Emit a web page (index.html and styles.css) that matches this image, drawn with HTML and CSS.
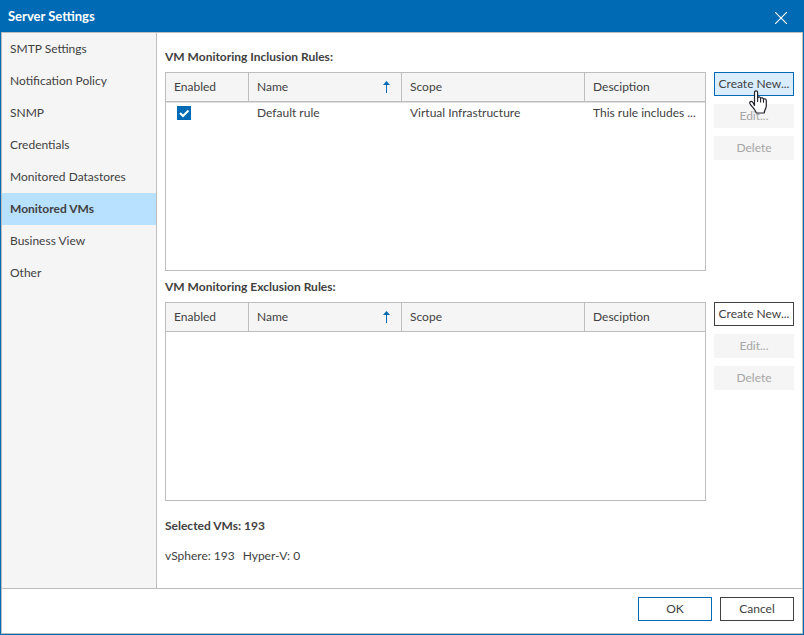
FILE: index.html
```html
<!DOCTYPE html>
<html lang="en">
<head>
<meta charset="utf-8">
<title>Server Settings</title>
<link rel="stylesheet" href="styles.css">
</head>
<body>
<div class="dialog">
  <header class="titlebar">
    <h1>Server Settings</h1>
    <button class="close" type="button" aria-label="Close">
      <svg width="12" height="12" viewBox="0 0 12 12"><path d="M0 0L12 12M12 0L0 12" stroke="#fff" stroke-width="1.1"/></svg>
    </button>
  </header>
  <div class="frame">
    <div class="body">
      <nav class="sidebar">
        <a href="#">SMTP Settings</a>
        <a href="#">Notification Policy</a>
        <a href="#">SNMP</a>
        <a href="#">Credentials</a>
        <a href="#">Monitored Datastores</a>
        <a href="#" class="active">Monitored VMs</a>
        <a href="#">Business View</a>
        <a href="#">Other</a>
      </nav>
      <main class="content">
        <section class="rules">
          <h2>VM Monitoring Inclusion Rules:</h2>
          <div class="grid">
            <table>
              <colgroup><col class="c-enabled"><col class="c-name"><col class="c-scope"><col></colgroup>
              <thead>
                <tr><th>Enabled</th><th><div class="sorted">Name <svg width="7" height="12" viewBox="0 0 7 12"><path d="M3.5 0L7 4H0Z" fill="#006bb4"/><path d="M3 3h1v9H3z" fill="#006bb4"/></svg></div></th><th>Scope</th><th>Desciption</th></tr>
              </thead>
              <tbody>
                <tr><td><label class="check"><input type="checkbox" checked aria-label="Enable Default rule"><svg width="14" height="14" viewBox="0 0 14 14"><path d="M3 7L6 10L11.5 4.5" fill="none" stroke="#fff" stroke-width="2"/></svg></label></td><td>Default rule</td><td>Virtual Infrastructure</td><td>This rule includes ...</td></tr>
              </tbody>
            </table>
          </div>
          <div class="actions">
            <button type="button" class="btn hover">Create New...
              <svg class="cursor" width="18" height="25" viewBox="0 0 18 25"><path d="M5.5 15.5V2.5C5.5.2 8.6.2 8.6 2.5V8C9.4 6.2 11.4 6.7 11.6 8.4C12.6 7.2 14.3 7.8 14.5 9.2C15.8 8.3 17.3 9.2 17.3 10.8V16C17.3 18.2 15.5 19.6 15.2 23H7.2C6.8 20 2.9 17 1 13.7C.1 11.8 2.3 10.5 3.8 12.3Z" fill="#fff" stroke="#22222c" stroke-width="1.2" stroke-linejoin="round"/><path d="M8.6 7.5v4.5M11.6 8.4v4M14.5 9.2v3.5" stroke="#22222c" stroke-width="1.1"/></svg>
            </button>
            <button type="button" class="btn" disabled>Edit...</button>
            <button type="button" class="btn" disabled>Delete</button>
          </div>
        </section>
        <section class="rules">
          <h2>VM Monitoring Exclusion Rules:</h2>
          <div class="grid">
            <table>
              <colgroup><col class="c-enabled"><col class="c-name"><col class="c-scope"><col></colgroup>
              <thead>
                <tr><th>Enabled</th><th><div class="sorted">Name <svg width="7" height="12" viewBox="0 0 7 12"><path d="M3.5 0L7 4H0Z" fill="#006bb4"/><path d="M3 3h1v9H3z" fill="#006bb4"/></svg></div></th><th>Scope</th><th>Desciption</th></tr>
              </thead>
            </table>
          </div>
          <div class="actions">
            <button type="button" class="btn">Create New...</button>
            <button type="button" class="btn" disabled>Edit...</button>
            <button type="button" class="btn" disabled>Delete</button>
          </div>
        </section>
        <h2 class="total">Selected VMs: 193</h2>
        <p class="counts"><span>vSphere: 193</span><span>Hyper-V: 0</span></p>
      </main>
    </div>
    <footer class="footer">
      <button type="button" class="btn primary">OK</button>
      <button type="button" class="btn">Cancel</button>
    </footer>
  </div>
</div>
</body>
</html>
```
FILE: styles.css
```css
* { box-sizing: border-box; }

body {
  margin: 0;
  color: #414141;
  background: #fff;
  font: 12px/16px Lato, "Open Sans", sans-serif;
}

h1, h2, p { margin: 0; font-size: 12px; }
h1 { font-size: 13px; }
button, input { font: inherit; color: inherit; }

.dialog {
  display: flex;
  flex-direction: column;
  min-height: 100vh;
  border: 1px solid #006bb4;
}

.titlebar {
  display: flex;
  align-items: center;
  justify-content: space-between;
  height: 31px;
  padding: 0 16px 1px 7px;
  background: #006bb4;
  color: #fff;
}

.close {
  display: flex;
  margin-top: 4px;
  padding: 0;
  border: 0;
  background: none;
}

.frame {
  flex: 1;
  display: flex;
  flex-direction: column;
  border: 1px solid #bdbdbd;
}

.body { flex: 1; display: flex; }

.sidebar {
  width: 155px;
  flex: none;
  background: #f5f5f5;
  border-right: 1px solid #bdbdbd;
}

.sidebar a {
  display: block;
  padding: 8px;
  color: inherit;
  text-decoration: none;
}

.sidebar .active { background: #b8e0ff; font-weight: bold; }

.content {
  flex: 1;
  min-width: 0;
  padding: 16px 8px;
}

.rules {
  display: grid;
  grid-template-columns: minmax(0, 1fr) 80px;
  column-gap: 8px;
  row-gap: 7px;
  margin-bottom: 8px;
}

.rules h2 { grid-column: 1 / -1; }

.grid {
  min-height: 199px;
  border: 1px solid #bdbdbd;
}

table {
  width: 100%;
  table-layout: fixed;
  border-collapse: separate;
  border-spacing: 0;
}

.c-enabled { width: 83px; }
.c-name { width: 153px; }
.c-scope { width: 183px; }

th, td {
  padding: 0 8px;
  text-align: left;
  font-weight: normal;
  white-space: nowrap;
  overflow: hidden;
  text-overflow: ellipsis;
}

th {
  height: 29px;
  background: #f5f5f5;
  border-right: 1px solid #bdbdbd;
  border-bottom: 1px solid #bdbdbd;
}

th:last-child { border-right: 0; }
td { height: 20px; }
tbody tr:first-child td { border-top: 1px solid #e0e0e0; }

.sorted {
  display: flex;
  align-items: center;
  justify-content: space-between;
  padding-right: 3px;
}

.check {
  display: grid;
  width: 14px;
  height: 14px;
  margin: 0 3px;
}

.check > * { grid-area: 1 / 1; }

.check input {
  appearance: none;
  width: 14px;
  height: 14px;
  margin: 0;
  border: 1px solid #006bb4;
}

.check input:checked { background: #006bb4; }
.check svg { z-index: 1; pointer-events: none; }

.actions { display: flex; flex-direction: column; gap: 8px; }

.btn {
  height: 24px;
  padding: 0;
  border: 1px solid #414141;
  background: #fff;
  white-space: nowrap;
}

.btn:disabled { border-color: #f5f5f5; background: #f5f5f5; color: #a6a6a6; }
.btn.hover { position: relative; border-color: #006bb4; background: #d9edff; }
.btn.primary { border-color: #006bb4; }

.cursor { position: absolute; left: 34px; top: 17px; z-index: 1; }

.total { margin-top: 17px; }

.counts { display: flex; gap: 8px; margin-top: 14px; }

.footer {
  display: flex;
  justify-content: flex-end;
  gap: 8px;
  padding: 8px 8px 12px;
  border-top: 1px solid #bdbdbd;
}

.footer .btn { width: 74px; }
```
